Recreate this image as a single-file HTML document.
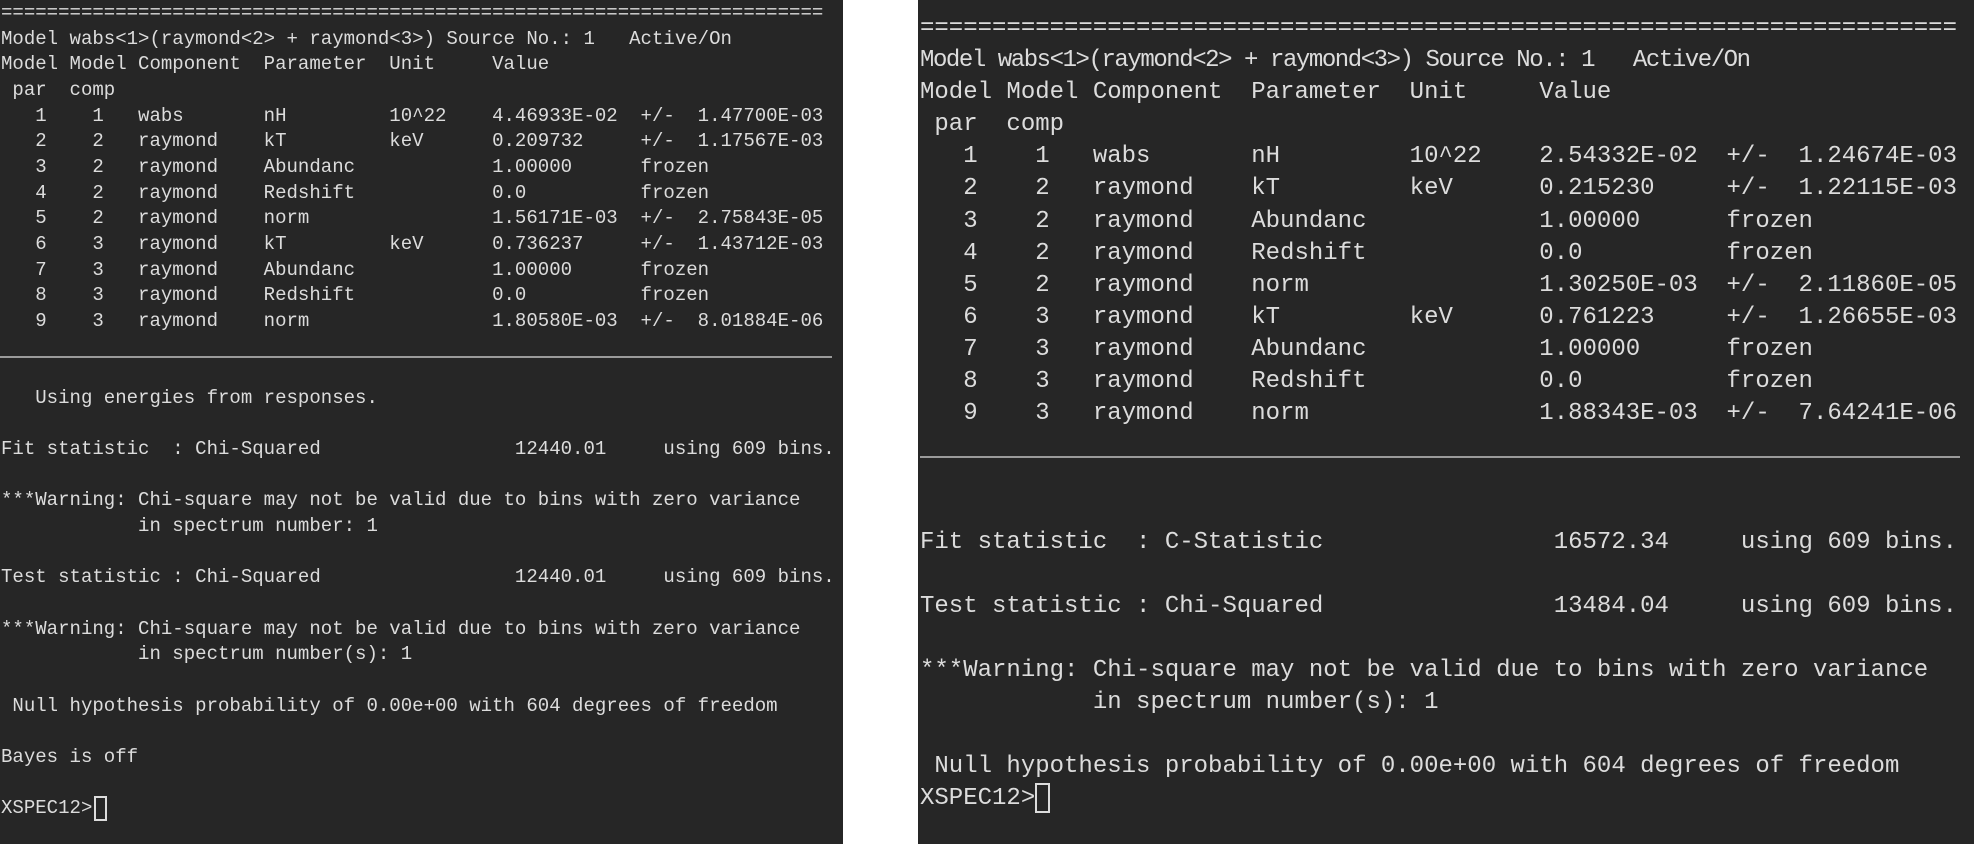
<!DOCTYPE html>
<html><head><meta charset="utf-8"><style>
html,body{margin:0;padding:0;background:#fff;width:1974px;height:844px;overflow:hidden}
.p{position:absolute;top:0;height:844px;background:#262626;overflow:hidden}
pre{margin:0;font-family:"Liberation Mono","DejaVu Sans Mono",monospace;color:#dcdcdc;white-space:pre;position:absolute}
#L{left:0;width:843px}
#R{left:918px;width:1056px}
#L pre{font-size:19.05px;line-height:25.66px;left:1px;top:1px}
#R pre{font-size:24px;line-height:32.1px;left:2px;top:13px}
#R pre .h{letter-spacing:-1.44px}
.sep{position:absolute;height:2px;background:#9a9a9a}
.cur{position:absolute;border:2px solid #dcdcdc;box-sizing:border-box}
</style></head><body>
<div class="p" id="L"><pre>========================================================================
Model wabs&lt;1&gt;(raymond&lt;2&gt; + raymond&lt;3&gt;) Source No.: 1   Active/On
Model Model Component  Parameter  Unit     Value
 par  comp
   1    1   wabs       nH         10^22    4.46933E-02  +/-  1.47700E-03
   2    2   raymond    kT         keV      0.209732     +/-  1.17567E-03
   3    2   raymond    Abundanc            1.00000      frozen
   4    2   raymond    Redshift            0.0          frozen
   5    2   raymond    norm                1.56171E-03  +/-  2.75843E-05
   6    3   raymond    kT         keV      0.736237     +/-  1.43712E-03
   7    3   raymond    Abundanc            1.00000      frozen
   8    3   raymond    Redshift            0.0          frozen
   9    3   raymond    norm                1.80580E-03  +/-  8.01884E-06


   Using energies from responses.

Fit statistic  : Chi-Squared                 12440.01     using 609 bins.

***Warning: Chi-square may not be valid due to bins with zero variance
            in spectrum number: 1

Test statistic : Chi-Squared                 12440.01     using 609 bins.

***Warning: Chi-square may not be valid due to bins with zero variance
            in spectrum number(s): 1

 Null hypothesis probability of 0.00e+00 with 604 degrees of freedom

Bayes is off

XSPEC12&gt;</pre>
<div class="sep" style="left:0;top:356px;width:832px"></div>
<div class="cur" style="left:94px;top:796px;width:13px;height:25px"></div>
</div>
<div class="p" id="R"><pre>========================================================================
<span class="h">Model wabs&lt;1&gt;(raymond&lt;2&gt; + raymond&lt;3&gt;) Source No.: 1   Active/On</span>
Model Model Component  Parameter  Unit     Value
 par  comp
   1    1   wabs       nH         10^22    2.54332E-02  +/-  1.24674E-03
   2    2   raymond    kT         keV      0.215230     +/-  1.22115E-03
   3    2   raymond    Abundanc            1.00000      frozen
   4    2   raymond    Redshift            0.0          frozen
   5    2   raymond    norm                1.30250E-03  +/-  2.11860E-05
   6    3   raymond    kT         keV      0.761223     +/-  1.26655E-03
   7    3   raymond    Abundanc            1.00000      frozen
   8    3   raymond    Redshift            0.0          frozen
   9    3   raymond    norm                1.88343E-03  +/-  7.64241E-06



Fit statistic  : C-Statistic                16572.34     using 609 bins.

Test statistic : Chi-Squared                13484.04     using 609 bins.

***Warning: Chi-square may not be valid due to bins with zero variance
            in spectrum number(s): 1

 Null hypothesis probability of 0.00e+00 with 604 degrees of freedom
XSPEC12&gt;</pre>
<div class="sep" style="left:2px;top:456px;width:1040px"></div>
<div class="cur" style="left:117px;top:783px;width:15px;height:30px"></div>
</div>
</body></html>
